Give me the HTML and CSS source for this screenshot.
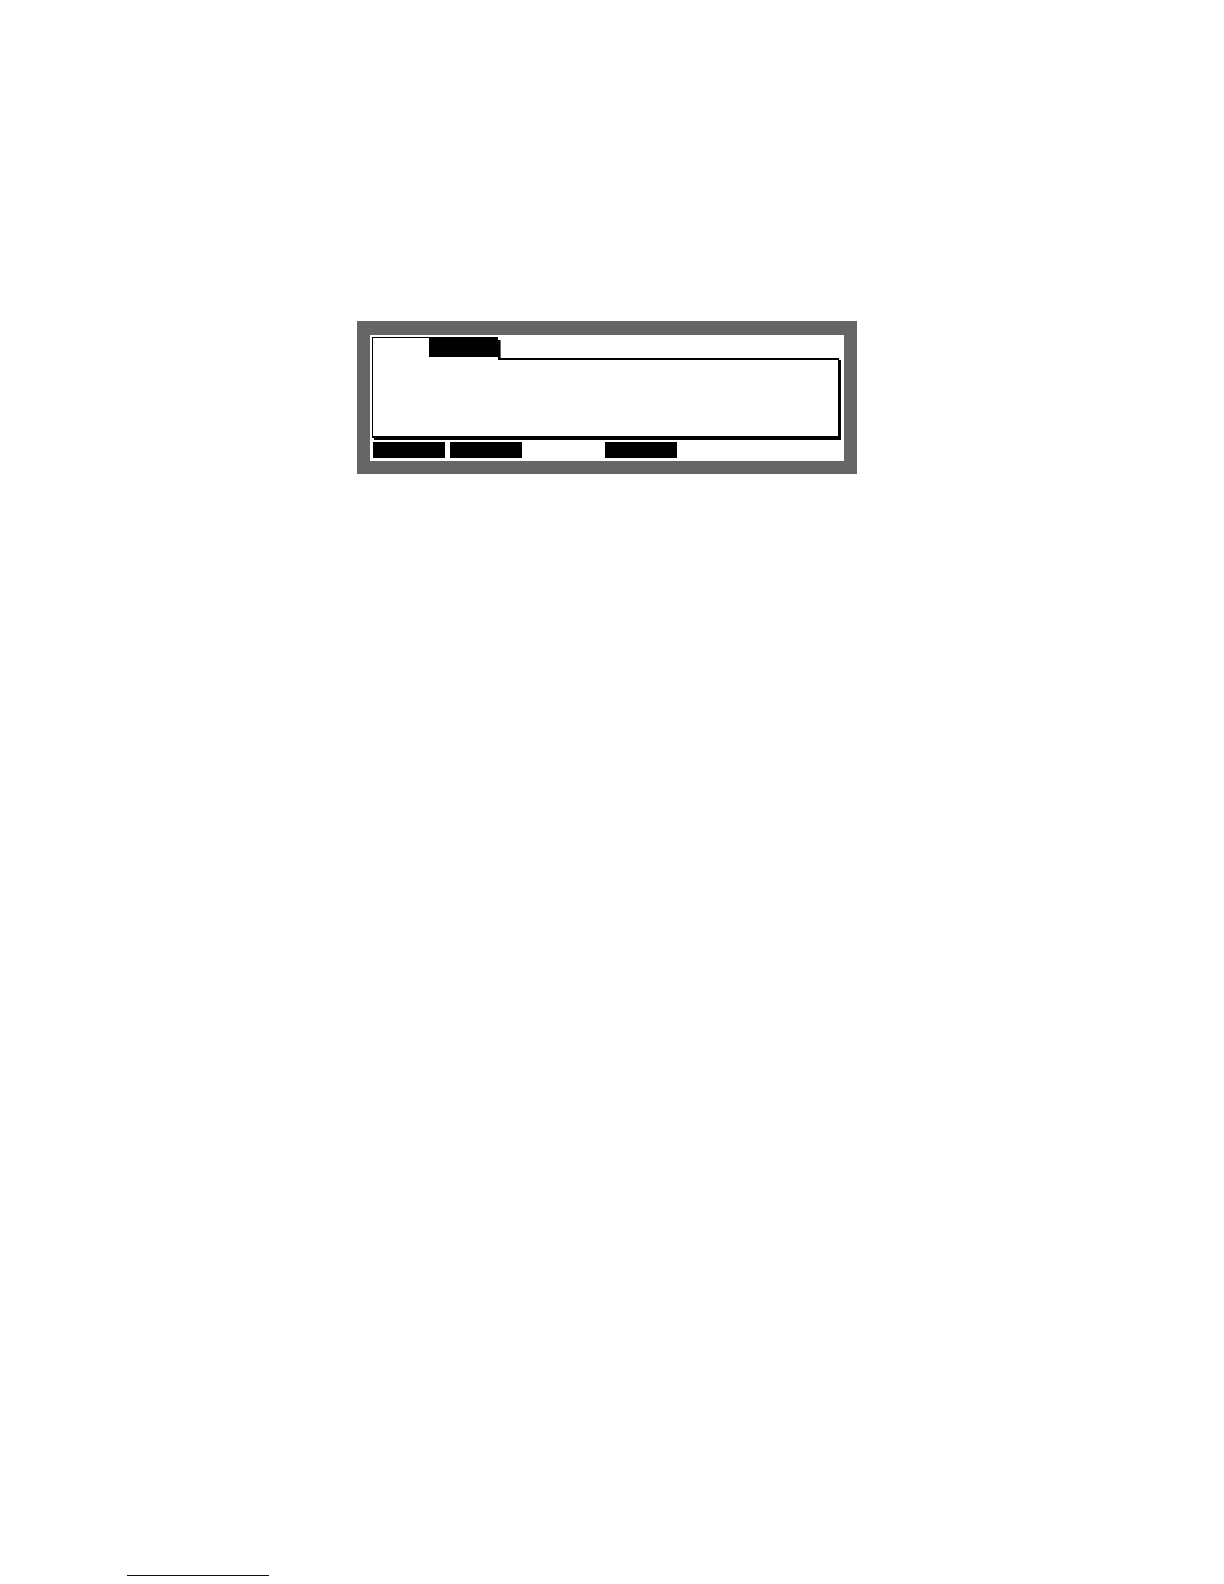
FILE: index.html
```
<!DOCTYPE html>
<html lang="en">
<head>
    <meta charset="UTF-8">
    <link rel="stylesheet" href="styles.css">
</head>
<body>
<main class="page">
    <section class="lcd">
        <div class="tabs">
            <button class="tab active" type="button"></button>
            <button class="tab" type="button"></button>
        </div>
        <div class="panel"></div>
        <div class="softkeys">
            <button class="softkey" type="button"></button>
            <button class="softkey" type="button"></button>
            <span></span>
            <button class="softkey" type="button"></button>
        </div>
    </section>
</main>

<footer class="footer">
    <a class="footer-link" href="#"></a>
</footer>
</body>
</html>
```

FILE: styles.css
```
:root {
    --bg: #ffffff;
    --ink: #000000;
    --bezel: #666666;
    --link: #000080;
}
* { box-sizing: border-box; }
body {
    margin: 0;
    min-height: 100vh;
    display: flex;
    flex-direction: column;
    font-family: "Liberation Sans", sans-serif;
    background: var(--bg);
    color: var(--ink);
}
button {
    margin: 0;
    padding: 0;
    border: 0;
    background: var(--ink);
    cursor: pointer;
}
.page {
    flex: 1;
    padding: 321px 367px 0 357px;
}
.lcd {
    padding: 2px 5px 3px 2px;
    border: 13px solid var(--bezel);
    border-top-width: 14px;
    background: var(--bg);
}

/* tab strip sits over the top edge of the panel */
.tabs {
    position: relative;
    display: flex;
    align-items: flex-start;
    width: 126px;
    height: 23px;
    margin-bottom: -2px;
    border-top: 1px solid var(--ink);
    border-left: 1px solid var(--ink);
    background: var(--bg);
}
.tabs::after {
    content: "";
    position: absolute;
    top: 2px;
    bottom: 2px;
    left: 100%;
    width: 2px;
    border-right: 1px solid var(--bezel);
    background: var(--ink);
}
.tab {
    flex: 1;
    height: 19px;
}
.tab.active {
    flex: none;
    width: 56px;
    background: var(--bg);
}
.panel {
    height: 80px;
    border: solid var(--ink);
    border-width: 2px 1px;
    box-shadow: 2px 2px 0 var(--ink);
}

.softkeys {
    display: grid;
    grid-template-columns: 72px 72px 73px 72px;
    gap: 5px;
    margin-top: 4px;
    padding-left: 1px;
}
.softkey { height: 16px; }

.footer { padding: 0 127px 8px; }
.footer-link {
    display: block;
    width: 142px;
    border-bottom: 1px solid var(--link);
}
```
